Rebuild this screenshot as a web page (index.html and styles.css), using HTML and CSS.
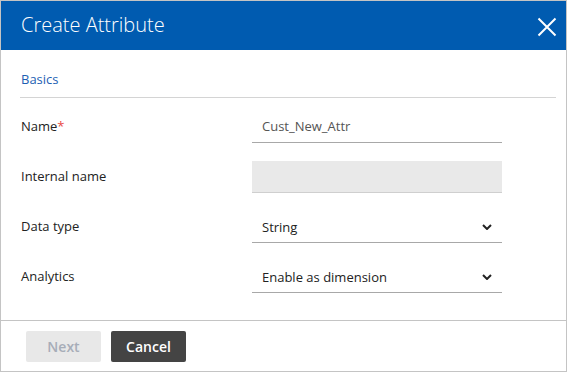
FILE: index.html
```html
<!DOCTYPE html>
<html>
<head>
<meta charset="utf-8">
<link rel="stylesheet" href="styles.css">
</head>
<body>
<div class="dialog">
  <div class="header">
    <div class="title">Create Attribute</div>
    <svg class="close" width="20" height="20" viewBox="0 0 20 20"><path d="M1.5 1.5 L18.5 18.5 M18.5 1.5 L1.5 18.5" stroke="#fff" stroke-width="2" fill="none"/></svg>
  </div>
  <div class="body">
    <div class="section">Basics</div>
    <div class="rows">
      <div class="row">
        <div class="label">Name<span class="req">*</span></div>
        <div class="field">Cust_New_Attr</div>
      </div>
      <div class="row">
        <div class="label">Internal name</div>
        <div class="field disabled"></div>
      </div>
      <div class="row">
        <div class="label">Data type</div>
        <div class="field select"><span>String</span><svg width="10" height="6" viewBox="0 0 10 6"><path d="M1 1 L5 5 L9 1" stroke="#222" stroke-width="2" fill="none"/></svg></div>
      </div>
      <div class="row">
        <div class="label">Analytics</div>
        <div class="field select"><span>Enable as dimension</span><svg width="10" height="6" viewBox="0 0 10 6"><path d="M1 1 L5 5 L9 1" stroke="#222" stroke-width="2" fill="none"/></svg></div>
      </div>
    </div>
  </div>
  <div class="footer">
    <button class="btn next">Next</button>
    <button class="btn cancel">Cancel</button>
  </div>
</div>
</body>
</html>
```
FILE: styles.css
```css
html, body {
  margin: 0;
  padding: 0;
  background: #fff;
}
body {
  font-family: "Open Sans", sans-serif;
}
.dialog {
  width: 567px;
  height: 372px;
  box-sizing: border-box;
  border: 1px solid #c4c4c4;
  display: flex;
  flex-direction: column;
}
.header {
  height: 49px;
  flex: none;
  background: #005bb0;
  display: flex;
  align-items: center;
  justify-content: space-between;
  padding: 0 9px 0 20px;
}
.title {
  color: #fff;
  font-size: 20px;
  font-weight: 300;
  line-height: 26px;
  margin-top: -1px;
}
.close {
  display: block;
  margin-top: 2px;
}
.body {
  flex: 1;
  padding: 0 10px 0 19px;
}
.section {
  height: 47px;
  border-bottom: 1px solid #d4d4d4;
  box-sizing: content-box;
  color: #1e5fb3;
  font-size: 13px;
  line-height: 18px;
  padding-top: 20px;
  box-sizing: border-box;
  height: 48px;
  padding-left: 1px;
}
.rows {
  padding-top: 13px;
}
.row {
  height: 50px;
  display: flex;
  align-items: flex-start;
}
.label {
  width: 231px;
  padding-left: 1px;
  font-size: 13px;
  color: #222;
  line-height: 30px;
}
.req {
  color: #e8493f;
}
.field {
  width: 250px;
  height: 32px;
  box-sizing: border-box;
  border-bottom: 1px solid #a8a8a8;
  padding: 0 10px;
  font-size: 13px;
  line-height: 31px;
  color: #555;
}
.field.disabled {
  background: #e9e9e9;
  border-bottom-color: #cfcfcf;
}
.field.select {
  display: flex;
  align-items: center;
  justify-content: space-between;
  color: #222;
  line-height: 32px;
  padding-right: 10px;
}
.field.select svg {
  display: block;
  margin-top: 0px;
}
.footer {
  flex: none;
  height: 51px;
  box-sizing: border-box;
  border-top: 1px solid #c4c4c4;
  display: flex;
  align-items: flex-start;
  gap: 10px;
  padding: 10px 0 0 25px;
}
.btn {
  width: 75px;
  height: 31px;
  border: none;
  border-radius: 2px;
  font-family: "Open Sans", sans-serif;
  font-size: 14px;
  font-weight: 600;
  padding: 0;
}
.next {
  background: #e8e8e8;
  color: #a7adb8;
}
.cancel {
  background: #444;
  color: #fff;
}
```
